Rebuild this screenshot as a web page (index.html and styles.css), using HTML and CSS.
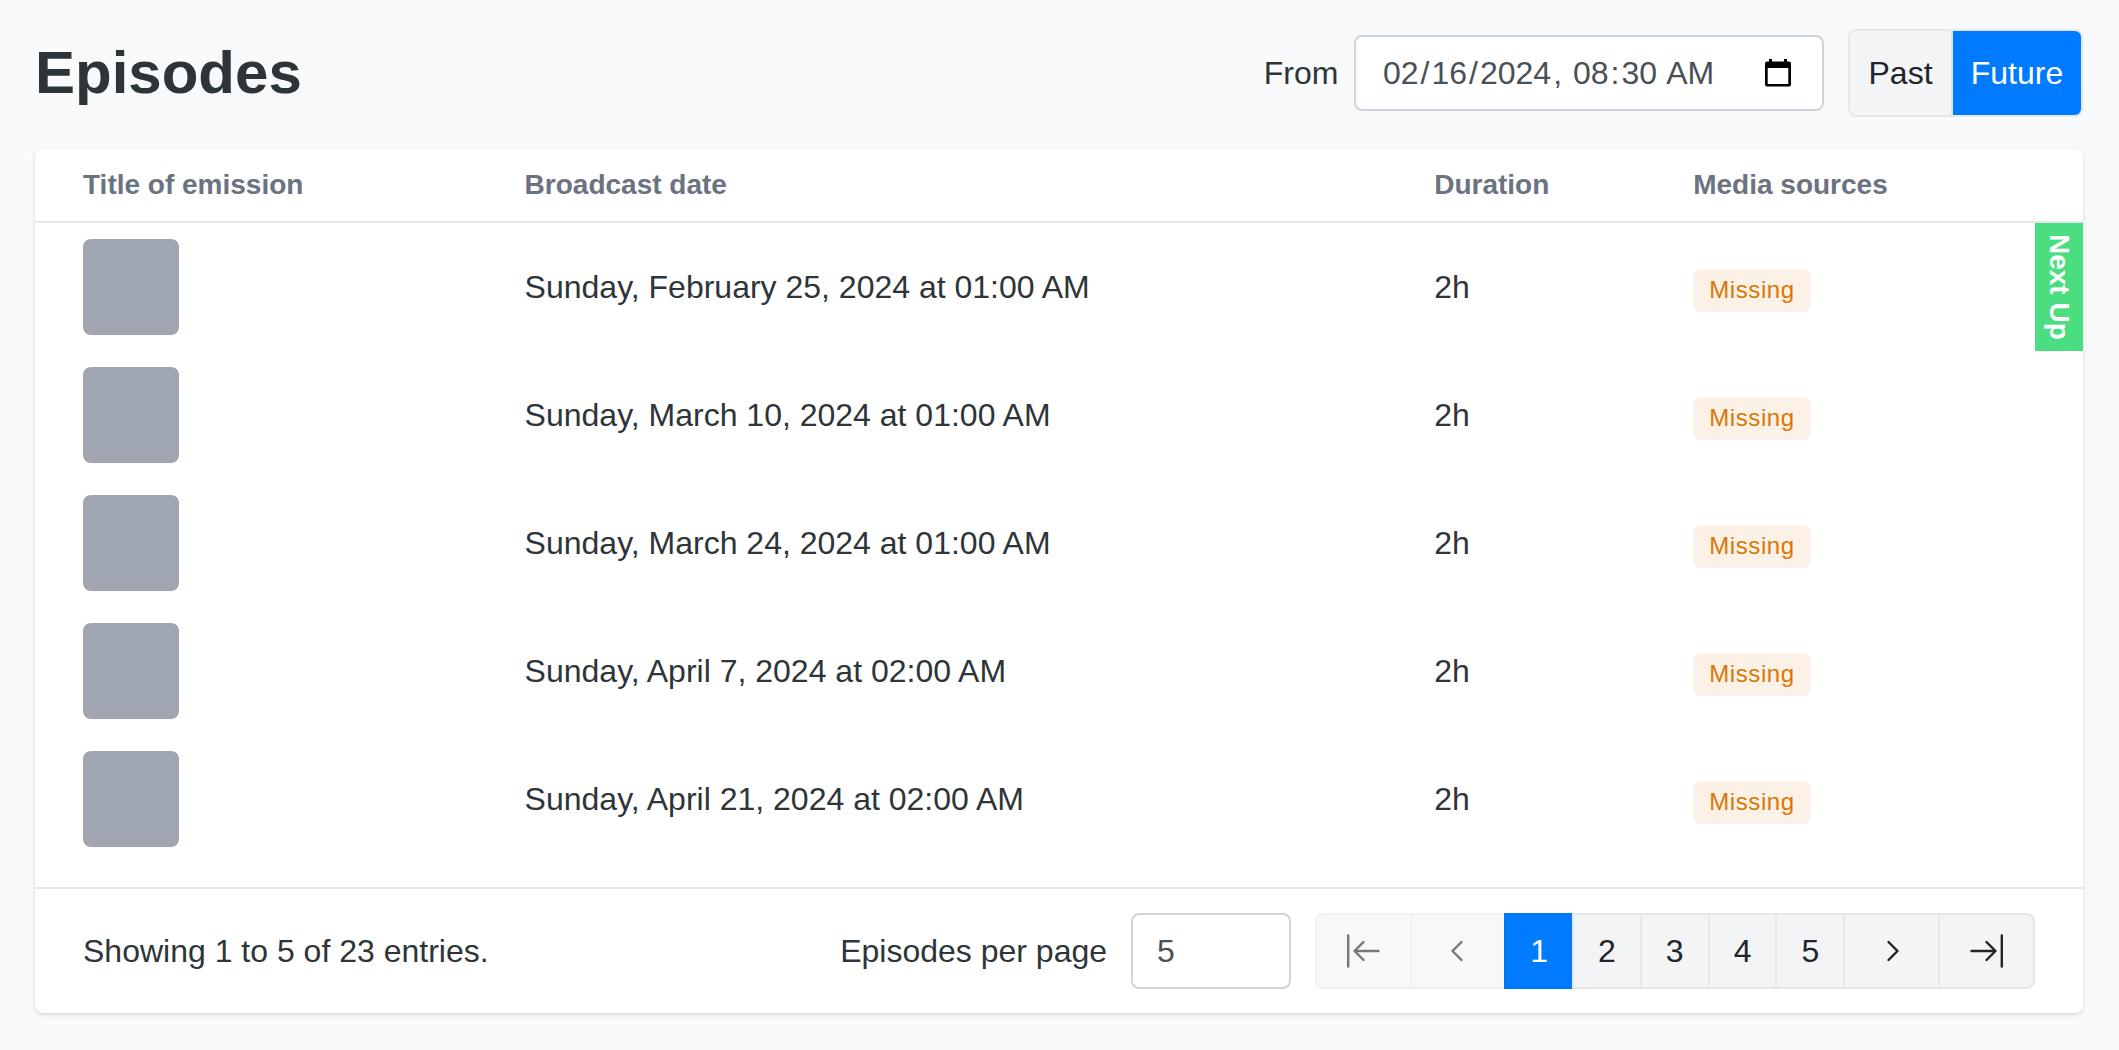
FILE: index.html
```html
<!DOCTYPE html>
<html lang="en">
<head>
<meta charset="UTF-8">
<meta name="viewport" content="width=device-width, initial-scale=1.0">
<title>Episodes</title>
<link rel="stylesheet" href="styles.css">
</head>
<body>
<div class="page-header">
    <h1>Episodes</h1>
    <div class="filters">
        <span class="filter-label">From</span>
        <div class="date-input">
            <span class="date-value"><span>02</span>/<span>16</span>/<span>2024</span>, <span>08</span>:<span>30</span> <span class="meridiem">AM</span></span>
            <svg class="calendar-icon" viewBox="0 0 26 28">
                <path fill-rule="evenodd" d="M4 0h3v2.500h12V0h3v2.500h2a2 2 0 0 1 2 2v21a2 2 0 0 1-2 2H2a2 2 0 0 1-2-2v-21a2 2 0 0 1 2-2h2zM2.700 9v16h20.600V9z"/>
            </svg>
        </div>
        <div class="button-group">
            <button>Past</button>
            <button class="active">Future</button>
        </div>
    </div>
</div>
<div class="card">
    <div class="row head">
        <div>Title of emission</div>
        <div>Broadcast date</div>
        <div>Duration</div>
        <div>Media sources</div>
    </div>
    <div class="rows">
        <div class="row">
            <div class="thumb"></div>
            <div>Sunday, February 25, 2024 at 01:00 AM</div>
            <div>2h</div>
            <div><span class="badge">Missing</span></div>
            <div class="next-up">Next Up</div>
        </div>
        <div class="row">
            <div class="thumb"></div>
            <div>Sunday, March 10, 2024 at 01:00 AM</div>
            <div>2h</div>
            <div><span class="badge">Missing</span></div>
        </div>
        <div class="row">
            <div class="thumb"></div>
            <div>Sunday, March 24, 2024 at 01:00 AM</div>
            <div>2h</div>
            <div><span class="badge">Missing</span></div>
        </div>
        <div class="row">
            <div class="thumb"></div>
            <div>Sunday, April 7, 2024 at 02:00 AM</div>
            <div>2h</div>
            <div><span class="badge">Missing</span></div>
        </div>
        <div class="row">
            <div class="thumb"></div>
            <div>Sunday, April 21, 2024 at 02:00 AM</div>
            <div>2h</div>
            <div><span class="badge">Missing</span></div>
        </div>
    </div>
    <div class="card-footer">
        <div class="summary">Showing 1 to 5 of 23 entries.</div>
        <label for="perPage">Episodes per page</label>
        <input type="text" id="perPage" class="per-page" value="5">
        <div class="pagination">
            <button class="arrow" disabled aria-label="First page">
                <svg viewBox="0 0 36 36"><path d="M3.200 2.500v31M33.500 18H9.500M18.500 9L9.500 18l9 9"/></svg>
            </button>
            <button class="arrow" disabled aria-label="Previous page">
                <svg viewBox="0 0 36 36"><path d="M21.500 9L12.500 18l9 9"/></svg>
            </button>
            <button class="active">1</button>
            <button>2</button>
            <button>3</button>
            <button>4</button>
            <button>5</button>
            <button class="arrow" aria-label="Next page">
                <svg viewBox="0 0 36 36"><path d="M14.500 9l9 9-9 9"/></svg>
            </button>
            <button class="arrow" aria-label="Last page">
                <svg viewBox="0 0 36 36"><path d="M32.800 2.500v31M2.500 18h24M17.500 9l9 9-9 9"/></svg>
            </button>
        </div>
    </div>
</div>
</body>
</html>
```
FILE: styles.css
```css
* {
    box-sizing: border-box;
}
body {
    margin: 0;
    padding: 29px 36px 37px 35px;
    background-color: #f9fafc;
    color: #2e3538;
    font-family: "Liberation Sans", Arial, sans-serif;
    font-size: 32px;
    line-height: 48px;
}
button, input {
    font: inherit;
}
.page-header {
    display: flex;
    align-items: center;
    justify-content: space-between;
    height: 88px;
    margin-bottom: 32px;
}
h1 {
    margin: 0;
    font-size: 60px;
    line-height: 72px;
}
.filters {
    display: flex;
    align-items: center;
}
.filter-label {
    margin-right: 16px;
}
.date-input {
    display: flex;
    align-items: center;
    justify-content: space-between;
    width: 469.6px;
    height: 76px;
    padding: 0 31px 0 24.6px;
    margin-right: 24px;
    background-color: #ffffff;
    border: 2px solid #ced4da;
    border-radius: 8px;
    color: #495057;
}
.date-value {
    white-space: pre;
}
.date-value span {
    padding: 0 2px;
}
.date-value .meridiem {
    padding-left: 0;
}
.calendar-icon {
    width: 26px;
    height: 28px;
    fill: #000000;
}
.button-group {
    display: flex;
    height: 88px;
    border: 2px solid #e5e7eb;
    border-radius: 8px;
    overflow: hidden;
}
.button-group button {
    width: 101px;
    padding: 0;
    border: none;
    background-color: #f3f4f6;
    color: #212529;
}
.button-group .active {
    width: 130px;
    border-left: 2px solid #dfe1e5;
    background-color: #007bff;
    background-clip: padding-box;
    color: #ffffff;
}
.card {
    background-color: #ffffff;
    border-radius: 8px;
    box-shadow: 0 2px 6px rgba(0, 0, 0, 0.1), 0 2px 4px -2px rgba(0, 0, 0, 0.1);
}
.row {
    position: relative;
    display: grid;
    grid-template-columns: 441.6px 909.6px 259px 1fr;
    align-items: center;
    height: 128px;
    padding: 0 48px;
}
.row.head {
    height: 74px;
    border-bottom: 2px solid #e5e7eb;
    color: #6b7280;
    font-size: 28px;
    font-weight: bold;
}
.rows {
    padding-bottom: 24px;
}
.thumb {
    width: 96px;
    height: 96px;
    border-radius: 8px;
    background-color: #9fa5b1;
}
.badge {
    display: inline-block;
    height: 43px;
    padding: 0 16px;
    margin-top: 3px;
    border-radius: 8px;
    background-color: #fcf1e7;
    color: #d97706;
    font-size: 24px;
    line-height: 41px;
    letter-spacing: 0.6px;
    vertical-align: middle;
}
.next-up {
    position: absolute;
    top: 0;
    right: 0;
    width: 48px;
    height: 128px;
    background-color: #4ade80;
    color: #ffffff;
    font-size: 28px;
    font-weight: bold;
    text-align: center;
    writing-mode: vertical-rl;
}
.card-footer {
    display: flex;
    align-items: center;
    height: 126px;
    padding: 0 48px;
    border-top: 2px solid #e5e7eb;
}
.summary {
    flex: 1;
}
.per-page {
    width: 160px;
    height: 76px;
    padding: 0 24px;
    margin: 0 24px;
    border: 2px solid #ced4da;
    border-radius: 8px;
    background-color: #ffffff;
    color: #495057;
}
.pagination {
    display: flex;
}
.pagination button {
    width: 69.8px;
    height: 76px;
    padding: 0;
    margin-left: -2px;
    border: 2px solid #e5e7eb;
    background-color: #f3f4f6;
    color: #212529;
}
.pagination .arrow {
    display: flex;
    align-items: center;
    justify-content: center;
    width: 96.9px;
}
.pagination .arrow:disabled {
    width: 96.6px;
}
.pagination button:first-child {
    margin-left: 0;
    border-radius: 8px 0 0 8px;
}
.pagination button:last-child {
    border-radius: 0 8px 8px 0;
}
.pagination button:disabled {
    border-color: #f0f1f3;
    background-color: #f8f8fa;
    color: #75787b;
}
.pagination .active {
    border-color: #0275f0;
    background-color: #007bff;
    color: #ffffff;
}
.pagination svg {
    width: 36px;
    height: 36px;
    fill: none;
    stroke: currentColor;
    stroke-width: 2.4;
    stroke-linecap: round;
    stroke-linejoin: round;
}
```
